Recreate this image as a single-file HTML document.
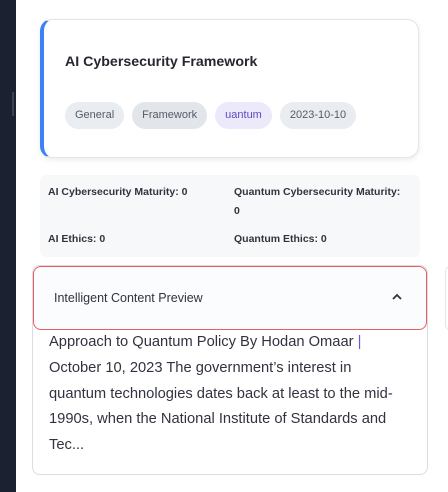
<!DOCTYPE html>
<html><head><meta charset="utf-8"><style>
*{box-sizing:border-box;margin:0;padding:0}
body{width:448px;height:492px;background:#fff;font-family:"Liberation Sans",sans-serif;position:relative;overflow:hidden;color:#31333f}
.side{position:absolute;left:0;top:0;width:16px;height:492px;background:#1b2130}
.side i{position:absolute;left:12px;top:92px;width:2px;height:24px;background:#3a4150}
.card{position:absolute;left:40px;top:19px;width:379px;height:139px;border:1px solid #e3e5ea;border-left:4px solid #3b82f6;border-radius:12px;box-shadow:0 2px 6px rgba(0,0,0,.08);background:#fff}
.title{position:absolute;left:21px;top:34px;font-size:14.2px;font-weight:bold;color:#262730}
.tags{position:absolute;left:21px;top:82px;display:flex;gap:8px}
.tag{height:27px;line-height:27px;border-radius:14px;padding:0 10px;font-size:11px;color:#555b66;background:#e9ecf0}
.tag.f{background:#e2e6eb}
.tag.q{background:#ece9fb;color:#5b4cc0}
.stats{position:absolute;left:40px;top:175px;width:380px;height:82px;background:#f7f8fa;border-radius:6px;font-size:10.5px;font-weight:bold;color:#31333f}
.stats span{position:absolute;line-height:19px}
.exp{position:absolute;left:32px;top:265px;width:396px;height:210px;border:1px solid #dcdde2;border-radius:8px}
.hdr{position:absolute;left:33px;top:266px;width:394px;height:64px;border:1.5px solid #f05b5f;border-radius:8px;background:#fbfcfd}
.hdr span{position:absolute;left:20px;top:24px;font-size:12.5px;color:#31333f}
.hdr svg{position:absolute;left:357px;top:25px}
.body{position:absolute;left:49px;top:330px;width:375px;font-size:14.7px;line-height:25.8px;color:#31333f;white-space:nowrap}
.right{position:absolute;left:445px;top:266px;width:10px;height:64px;border:1px solid #e3e5ea;border-radius:8px}
</style></head><body>
<div class="side"><i></i></div>
<div class="card">
<div class="title">AI Cybersecurity Framework</div>
<div class="tags"><div class="tag">General</div><div class="tag f">Framework</div><div class="tag q">uantum</div><div class="tag">2023-10-10</div></div>
</div>
<div class="stats">
<span style="left:8px;top:8px">AI Cybersecurity Maturity: 0</span>
<span style="left:194px;top:8px;width:184px">Quantum Cybersecurity Maturity:<br>0</span>
<span style="left:8px;top:55px">AI Ethics: 0</span>
<span style="left:194px;top:55px">Quantum Ethics: 0</span>
</div>
<div class="exp"></div>
<div class="hdr"><span>Intelligent Content Preview</span>
<svg width="12" height="10" viewBox="0 0 12 10"><path d="M2 7 L6 3 L10 7" fill="none" stroke="#31333f" stroke-width="1.8"/></svg></div>
<div class="right"></div>
<div class="body">Approach to Quantum Policy By Hodan Omaar <span style="color:#6b5bd0">|</span><br>October 10, 2023 The government’s interest in<br>quantum technologies dates back at least to the mid-<br>1990s, when the National Institute of Standards and<br>Tec...</div>
</body></html>
